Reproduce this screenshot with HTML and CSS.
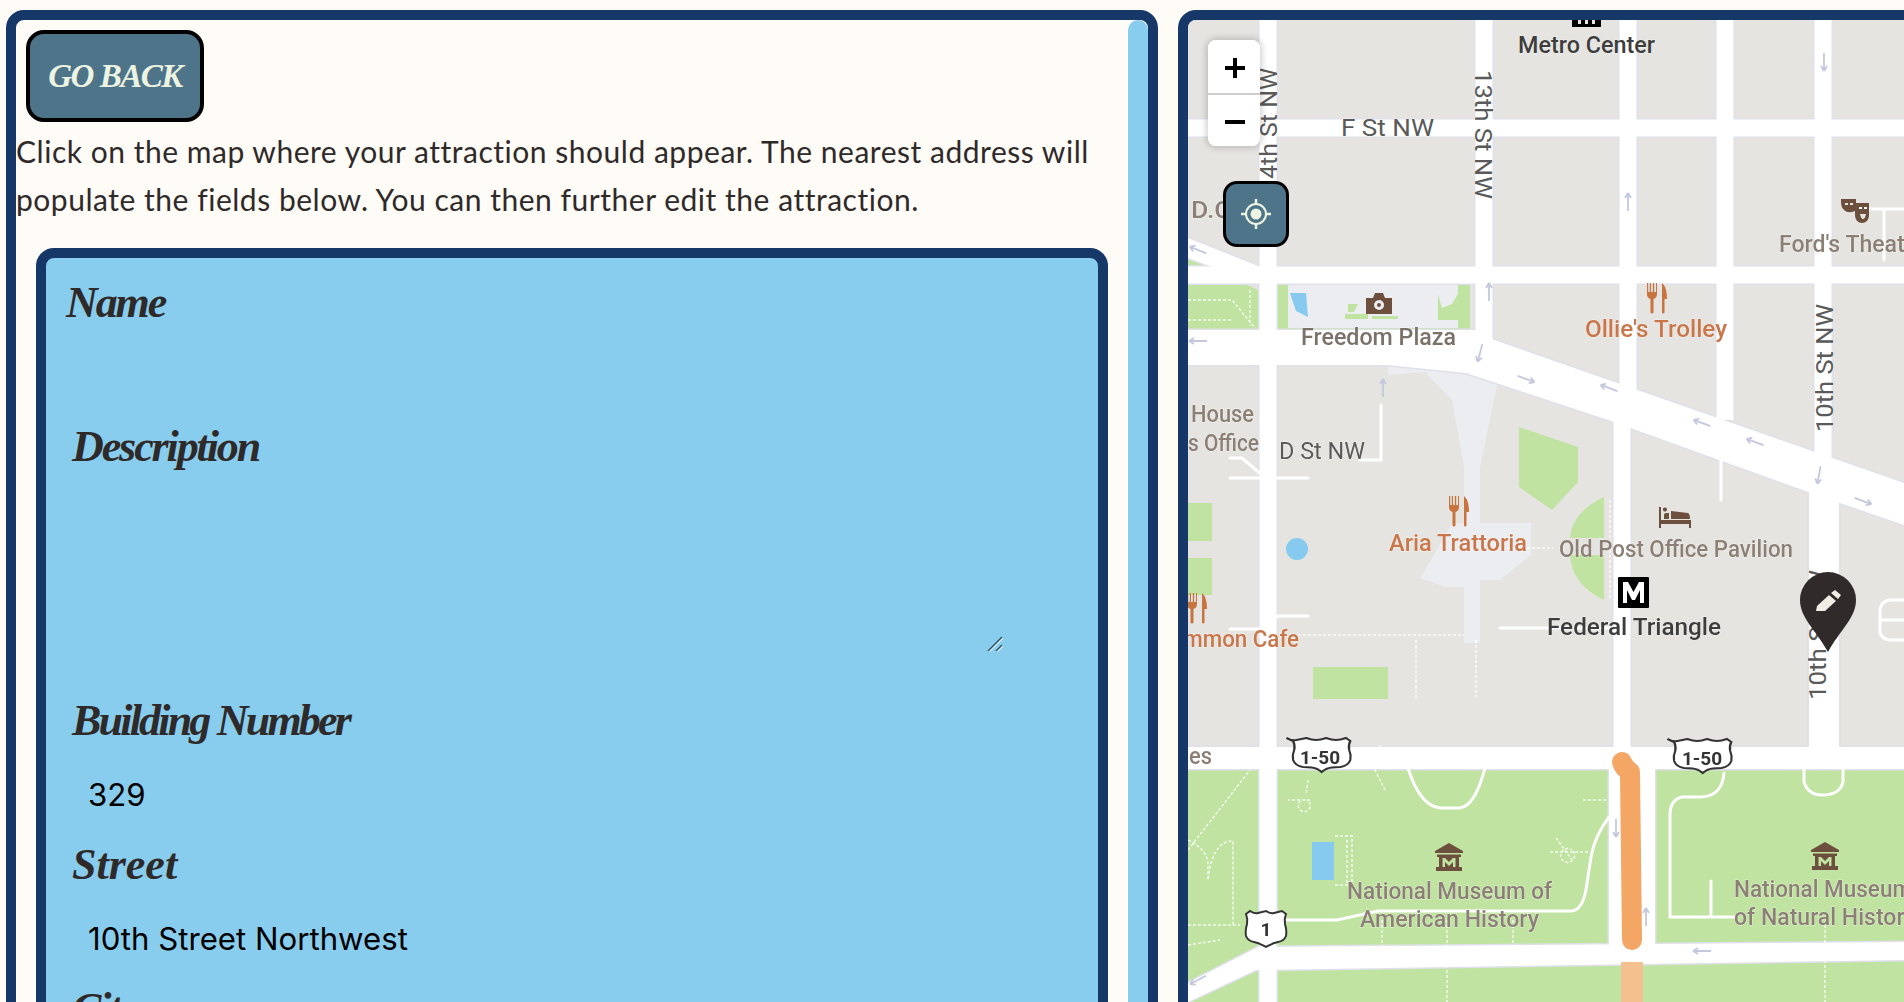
FILE: index.html
```html
<!DOCTYPE html>
<html lang="en">
<head>
<meta charset="utf-8">
<title>Add attraction</title>
<link rel="stylesheet" href="styles.css">
</head>
<body>
<main class="page">
  <section class="panel panel-form">
    <div class="panel-body">
      <button class="back-btn" type="button">Go Back</button>
      <p class="hint">Click on the map where your attraction should appear. The nearest address will populate the fields below. You can then further edit the attraction.</p>
      <form class="form-box">
        <div class="field">
          <label class="field-label" for="f-name">Name</label>
          <input class="field-input" id="f-name" type="text">
        </div>
        <div class="field field-desc">
          <label class="field-label field-label-in" for="f-desc">Description</label>
          <textarea class="field-area" id="f-desc"></textarea>
          <svg class="resize-handle" viewBox="0 0 16 16" width="16" height="16" aria-hidden="true">
            <path class="resize-light" d="M2 16L16 2M10 16L16 10"/>
            <path class="resize-dark" d="M1 15L15 1M9 15L15 9"/>
          </svg>
        </div>
        <div class="field">
          <label class="field-label field-label-in field-label-tight" for="f-num">Building Number</label>
          <input class="field-input" id="f-num" type="text" value="329">
        </div>
        <div class="field">
          <label class="field-label field-label-in field-label-wide" for="f-street">Street</label>
          <input class="field-input" id="f-street" type="text" value="10th Street Northwest">
        </div>
        <div class="field">
          <label class="field-label field-label-in" for="f-city">City</label>
          <input class="field-input" id="f-city" type="text" value="Washington">
        </div>
      </form>
    </div>
    <div class="scroll-thumb"></div>
  </section>

  <section class="panel panel-map">
    <svg class="map" viewBox="1188 20 716 982" width="716" height="982" aria-label="Map of downtown Washington">
      <defs>
        <path id="arr" d="M-9 0H9M-9 0l5-3M-9 0l5 3"/>
        <path id="fork" d="M0 0v11q0 4 3.500 5v13q0 1.500 1.500 1.500t1.500-1.500v-13q3.500-1 3.500-5V0H9v9H7.200V0H5.800v9H4V0H2.800v9H1.200V0zM15 0q5 4 5 16h-2.500v13q0 1.500-1.300 1.500T15 29z"/>
        <path id="museum" d="M14 0L28 8V10H0V8zM2 11.500H26V14H24V24H27V28H1V24H4V14H2zM7.500 15V24H10L10 19 14 23 18 19V24H20.500V15H18L14 19 10 15z"/>
        <path id="shield50" d="M5 1q4 3 9 2t9-2q5 2 9 2t9-2q5 2 9 2t9-2l4 3q-2 4-1 9 2 5 1 10-2 6-9 7-9 0-13 2-3 2-4 3-1-1-4-3-4-2-13-2-7-1-9-7-1-5 1-10 1-5-1-9z"/>
        <path id="shield1" d="M4 1q4 3 8 2t8-2q4 3 8 2t8-2l4 3q-2 5-1 10 2 7 1 12-2 5-8 6-5 1-8 3-2 1-4 2-2-1-4-2-3-2-8-3-6-1-8-6-1-5 1-12 1-5-1-10z"/>
        <g id="wide-roads">
          <path d="M1188 238L1258 266V284L1188 258Z"/>
          <path d="M1480 335L1904 483V525L1808 492 1614 422 1466 373 1388 365H1188V330H1480Z"/>
          <rect x="1809" y="480" width="30" height="275"/>
          <rect x="1188" y="747" width="716" height="22"/>
          <rect x="1609" y="760" width="46" height="190"/>
          <path d="M1258 947L1904 942V960L1256 970 1188 1002V983Z"/>
        </g>
      </defs>
      <g class="map-art">
        <rect class="m-ground" x="1188" y="20" width="716" height="982"/>
        <rect class="m-park" x="1188" y="760" width="716" height="242"/>

        <!-- parks and plazas -->
        <path class="m-park" d="M1188 258L1258 290V330H1188z"/>
        <rect class="m-park" x="1276" y="283" width="194" height="48"/>
        <rect class="m-plaza" x="1288" y="284" width="170" height="44"/>
        <path class="m-water" d="M1290 293H1306L1308 317L1296 311Z"/>
        <path class="m-park" d="M1348 304H1358L1354 312H1348ZM1345 314H1368V319H1345ZM1372 316H1398V319H1372ZM1438 294L1442 308 1452 304 1458 294V320H1438Z"/>
        <path class="m-plaza" d="M1388 365H1490L1498 380 1480 467 1480 523H1531V555L1500 580H1480V643H1464V587H1445L1420 578 1434 555 1452 523H1464V467L1452 400 1425 372 1388 375Z"/>
        <path class="m-park" d="M1519 427L1578 447V482L1552 510 1519 487Z"/>
        <path class="m-park" d="M1604 497V538H1570Q1572 512 1604 497ZM1570 555H1604V600Q1572 585 1570 555Z"/>
        <rect class="m-park" x="1188" y="503" width="24" height="38"/>
        <rect class="m-park" x="1188" y="558" width="24" height="37"/>
        <rect class="m-park" x="1313" y="667" width="75" height="32"/>
        <ellipse class="m-water" cx="1297" cy="549" rx="11" ry="11"/>
        <rect class="m-water" x="1312" y="842" width="22" height="38"/>

        <!-- road casings -->
        <g class="m-casing">
          <path d="M1268 20V1002M1484 20V340M1628 20V395M1622 420V760M1725 20V420M1823 20V470"/>
          <path d="M1188 128H1904M1188 275H1904"/>
        </g>
        <use class="m-casing-wide" href="#wide-roads"/>
        <!-- roads -->
        <g class="m-road">
          <path d="M1268 20V1002M1484 20V340M1628 20V395M1622 420V760M1725 20V420M1823 20V470"/>
          <path d="M1188 128H1904M1188 275H1904"/>
        </g>
        <use class="m-white" href="#wide-roads"/>

        <!-- service roads and footpaths -->
        <g class="m-path">
          <path d="M1408 768Q1420 806 1440 808H1460Q1475 806 1485 768"/>
          <path d="M1804 768V782Q1808 795 1822 795 1840 795 1843 782V768"/>
          <path d="M1724 773Q1722 797 1700 797H1682Q1670 800 1670 815V917H1734M1711 881V917"/>
          <path d="M1286 920H1337L1378 911H1572Q1582 910 1586 890L1591 857Q1595 835 1609 817"/>
          <path d="M1230 478L1262 478 1308 478M1230 458H1242L1262 475"/>
          <path d="M1230 629H1262L1278 616H1308"/>
          <path d="M1500 628H1614"/>
          <path d="M1381 405V460H1360M1721 460V500"/>
          <path d="M1844 209H1904M1719 135V222M1884 209V260"/>
          <path d="M1904 600H1892Q1880 600 1880 612V630Q1880 640 1892 640H1904M1880 620H1904"/>
        </g>
        <g class="m-dash">
          <path d="M1188 300H1232L1255 328M1232 300V300M1188 320H1232M1250 290V326"/>
          <path d="M1380 745L1375 770 1385 790M1310 800H1288M1309 802A6 6 0 1 1 1308 801M1308 780L1306 795"/>
          <path d="M1335 836H1352V885H1335M1347 840V884"/>
          <path d="M1188 850L1250 770M1188 840Q1208 850 1208 865V880Q1212 842 1232 841H1233V925"/>
          <path d="M1188 925H1240M1188 945L1220 940"/>
          <path d="M1382 920V947M1447 920V947M1513 920V947M1825 925V1002M1447 960V1002"/>
          <path d="M1583 800H1608M1556 838L1572 860M1550 852H1590M1573 851A7 7 0 1 1 1572 850"/>
          <path d="M1298 635H1464M1416 640V700M1476 640V700M1610 500V600"/>
          <path d="M1497 548H1553"/>
        </g>

        <!-- orange road -->
        <path class="m-orange" d="M1622 762Q1624 768 1630 772L1632 940"/>
        <rect class="m-orange-pale" x="1621" y="962" width="22" height="40"/>

        <g class="m-arrows">
          <use href="#arr" transform="translate(1824 62) rotate(-90)"/>
          <use href="#arr" transform="translate(1628 202) rotate(90)"/>
          <use href="#arr" transform="translate(1198 250) rotate(22)"/>
          <use href="#arr" transform="translate(1489 292) rotate(90)"/>
          <use href="#arr" transform="translate(1198 341)"/>
          <use href="#arr" transform="translate(1480 353) rotate(-75)"/>
          <use href="#arr" transform="translate(1526 379) rotate(200)"/>
          <use href="#arr" transform="translate(1609 388) rotate(20)"/>
          <use href="#arr" transform="translate(1383 388) rotate(90)"/>
          <use href="#arr" transform="translate(1702 423) rotate(20)"/>
          <use href="#arr" transform="translate(1755 442) rotate(20)"/>
          <use href="#arr" transform="translate(1819 475) rotate(-80)"/>
          <use href="#arr" transform="translate(1863 501) rotate(200)"/>
          <use href="#arr" transform="translate(1616 828) rotate(-90)"/>
          <use href="#arr" transform="translate(1646 917) rotate(90)"/>
          <use href="#arr" transform="translate(1702 951)"/>
          <use href="#arr" transform="translate(1198 980) rotate(-28)"/>
        </g>

        <!-- labels -->
        <text class="t t-dark" x="1518" y="53" textLength="137" lengthAdjust="spacingAndGlyphs">Metro Center</text>
        <text class="t t-road" x="1341" y="136" textLength="93" lengthAdjust="spacingAndGlyphs">F St NW</text>
        <text class="t t-road" transform="translate(1277 193) rotate(-90)" textLength="125" lengthAdjust="spacingAndGlyphs">14th St NW</text>
        <text class="t t-road" transform="translate(1475 70) rotate(90)" textLength="129" lengthAdjust="spacingAndGlyphs">13th St NW</text>
        <text class="t t-road" transform="translate(1833 432) rotate(-90)" textLength="128" lengthAdjust="spacingAndGlyphs">10th St NW</text>
        <text class="t t-road" transform="translate(1826 700) rotate(-90)" textLength="130" lengthAdjust="spacingAndGlyphs">10th St NW</text>
        <text class="t t-road" x="1279" y="459" textLength="86" lengthAdjust="spacingAndGlyphs">D St NW</text>
        <text class="t t-poi" x="1779" y="252" textLength="146" lengthAdjust="spacingAndGlyphs">Ford's Theatre</text>
        <text class="t t-plaza" x="1301" y="345" textLength="155" lengthAdjust="spacingAndGlyphs">Freedom Plaza</text>
        <text class="t t-food" x="1585" y="337" textLength="142" lengthAdjust="spacingAndGlyphs">Ollie's Trolley</text>
        <text class="t t-poi" x="1191" y="218" textLength="48" lengthAdjust="spacingAndGlyphs">D.C.</text>
        <text class="t t-poi" x="1191" y="422" textLength="63" lengthAdjust="spacingAndGlyphs">House</text>
        <text class="t t-poi" x="1188" y="451" textLength="71" lengthAdjust="spacingAndGlyphs">s Office</text>
        <text class="t t-food" x="1389" y="551" textLength="138" lengthAdjust="spacingAndGlyphs">Aria Trattoria</text>
        <text class="t t-poi" x="1559" y="557" textLength="234" lengthAdjust="spacingAndGlyphs">Old Post Office Pavilion</text>
        <text class="t t-dark" x="1547" y="635" textLength="174" lengthAdjust="spacingAndGlyphs">Federal Triangle</text>
        <text class="t t-food" x="1156" y="647" textLength="143" lengthAdjust="spacingAndGlyphs">Common Cafe</text>
        <text class="t t-poi" x="1189" y="764" textLength="23" lengthAdjust="spacingAndGlyphs">es</text>
        <text class="t t-poi" x="1347" y="899" textLength="205" lengthAdjust="spacingAndGlyphs">National Museum of</text>
        <text class="t t-poi" x="1360" y="927" textLength="179" lengthAdjust="spacingAndGlyphs">American History</text>
        <text class="t t-poi" x="1734" y="897" textLength="178" lengthAdjust="spacingAndGlyphs">National Museum</text>
        <text class="t t-poi" x="1734" y="925" textLength="182" lengthAdjust="spacingAndGlyphs">of Natural History</text>

        <!-- POI icons -->
        <path class="i-black" d="M1572 20H1601V27H1572ZM1578 20V24H1581V20ZM1585 20V24H1588V20ZM1592 20V24H1595V20Z" fill-rule="evenodd"/>
        <use class="i-food" href="#fork" transform="translate(1647 283)"/>
        <use class="i-food" href="#fork" transform="translate(1449 496)"/>
        <use class="i-food" href="#fork" transform="translate(1187 593)"/>
        <path class="i-brown" fill-rule="evenodd" d="M1366 298H1373L1375 293H1383L1385 298H1392V314H1366ZM1379 300A5 5 0 1 0 1379.100 310 5 5 0 0 0 1379 300ZM1379 303A2 2 0 1 1 1378.900 307 2 2 0 0 1 1379 303Z"/>
        <path class="i-brown" fill-rule="evenodd" d="M1841 199H1856V203H1869V216Q1868 223 1862 223 1856 223 1855 216V211Q1848 214 1844 210 1841 207 1841 202ZM1845 203V205H1848V203ZM1850 203V205H1853V203ZM1859 207V209H1862V207ZM1864 207V209H1867V207ZM1860 214H1866Q1865 219 1863 219 1861 219 1860 214Z"/>
        <path class="i-brown" d="M1659 507H1661V520H1691V528H1689V524H1661V528H1659ZM1666 513H1669V519H1664V515Q1664 513 1666 513ZM1671 511L1688 513Q1690 514 1690 519H1671ZM1663 510A2 2 0 1 1 1666.900 510 2 2 0 0 1 1663 510Z"/>
        <use class="i-brown" href="#museum" transform="translate(1435 843)"/>
        <use class="i-brown" href="#museum" transform="translate(1811 842)"/>
        <rect class="i-black" x="1618" y="577" width="31" height="31" rx="1"/>
        <path class="i-white" d="M1623 603V582H1628L1633.500 592 1639 582H1644V603H1640V590L1635 600H1632L1627 590V603Z"/>

        <!-- highway shields -->
        <use class="i-shield" href="#shield50" transform="translate(1281 737) scale(1.1 1)"/>
        <text class="t-shield" x="1320" y="764" text-anchor="middle">1-50</text>
        <use class="i-shield" href="#shield50" transform="translate(1662 738) scale(1.1 1)"/>
        <text class="t-shield" x="1702" y="765" text-anchor="middle">1-50</text>
        <use class="i-shield" href="#shield1" transform="translate(1246 910)"/>
        <text class="t-shield" x="1266" y="936" text-anchor="middle">1</text>
      </g>
      <!-- selected point pin -->
      <path class="pin" d="M1828 652C1816 630 1800 618 1800 600A28 28 0 0 1 1856 600C1856 618 1840 630 1828 652Z"/>
      <path class="pin-icon" d="M1835 590L1841 595 1838 599 1831 593ZM1829 595L1836 601 1825 611H1816L1817 606Z"/>
    </svg>

    <div class="zoom-ctl">
      <button class="zoom-btn" type="button" aria-label="Zoom in">
        <svg viewBox="0 0 24 24" width="24" height="24"><path class="ctl-stroke" d="M12 2V22M2 12H22"/></svg>
      </button>
      <button class="zoom-btn" type="button" aria-label="Zoom out">
        <svg viewBox="0 0 24 24" width="24" height="24"><path class="ctl-stroke" d="M2 12H22"/></svg>
      </button>
    </div>
    <button class="locate-btn" type="button" aria-label="Find my location">
      <svg viewBox="0 0 32 32" width="32" height="32">
        <circle class="loc-ring" cx="16" cy="16" r="10"/>
        <circle class="loc-dot" cx="16" cy="16" r="5.500"/>
        <path class="loc-tick" d="M16 1V6M16 26V31M1 16H6M26 16H31"/>
      </svg>
    </button>
  </section>
</main>
</body>
</html>
```
FILE: styles.css
```css
* { box-sizing: border-box; }
html, body { margin: 0; height: 100%; overflow: hidden; background: #fffbf7; }
.page {
  display: flex;
  gap: 20px;
  width: 2100px;
  padding: 10px 0 0 6px;
  height: 1200px;
}
.panel {
  border: 10px solid #163868;
  border-radius: 18px;
  height: 1150px;
  overflow: hidden;
}
.panel-form {
  width: 1152px;
  flex: none;
  background: #fffbf7;
  display: flex;
}
.panel-body { flex: 1; min-width: 0; }
.scroll-thumb {
  width: 20px;
  flex: none;
  background: #89cdee;
  border-radius: 10px 10px 0 0;
}
.back-btn {
  display: block;
  margin: 10px 0 0 10px;
  width: 178px;
  height: 92px;
  border: 4px solid #000;
  border-radius: 18px;
  background: #4d7489;
  color: #eef4e2;
  font: italic 700 33px "Liberation Serif", serif;
  text-transform: uppercase;
  letter-spacing: -1.500px;
  padding: 0;
}
.hint {
  margin: 0;
  padding-top: 5px;
  font: 400 30px/48px "Lato", sans-serif;
  color: #2f2a2a;
  letter-spacing: 0.52px;
  height: 112px;
}
.form-box {
  margin: 14px 20px 0 20px;
  padding: 0 20px;
  border: 10px solid #163868;
  border-radius: 18px;
  background: #89cdee;
}
.field { display: flex; flex-direction: column; }
.field-desc { position: relative; }
.field-label {
  font: italic 700 44px/90px "Liberation Serif", serif;
  letter-spacing: -2.100px;
  color: #2f2a2a;
  height: 84px;
}
.field-label-in { padding-left: 6px; }
.field-label-tight { letter-spacing: -2.800px; }
.field-label-wide { letter-spacing: 0; }
.field-input {
  height: 60px;
  border: 0;
  background: transparent;
  padding: 10px 22px 0;
  font: 400 31.200px "Inter", sans-serif;
  color: #000;
  outline: 0;
  width: 100%;
}
.field-area {
  height: 190px;
  width: 100%;
  border: 0;
  background: transparent;
  outline: 0;
  display: block;
  resize: none;
}
.resize-handle {
  position: absolute;
  left: 921px;
  top: 234px;
}
.resize-dark { fill: none; stroke: #2e4a5c; stroke-width: 1.300; }
.resize-light { fill: none; stroke: #d8eef9; stroke-width: 1.300; }
.panel-map {
  width: 900px;
  flex: none;
  position: relative;
  background: #e5e4e0;
}
.map { display: block; }
.map-art { filter: blur(0.6px); }
.m-ground { fill: #e5e4e0; }
.m-park { fill: #c0e3a1; }
.m-plaza { fill: #ecedf1; }
.m-water { fill: #86caef; }
.m-white { fill: #fff; }
.m-casing-wide { fill: #dfe0ea; stroke: #dfe0ea; stroke-width: 3; }
.m-casing path { fill: none; stroke: #dfe0ea; stroke-width: 20; }
.m-road path { fill: none; stroke: #fff; stroke-width: 17; }
.m-path path { fill: none; stroke: #fff; stroke-width: 3; stroke-linecap: round; }
.m-dash path { fill: none; stroke: #fff; stroke-width: 1.500; stroke-dasharray: 3 2; opacity: .8; }
.m-orange { fill: none; stroke: #f4a664; stroke-width: 20; stroke-linecap: round; stroke-linejoin: round; }
.m-orange-pale { fill: #f5c08f; }
.m-arrows use { fill: none; stroke: #c3c8de; stroke-width: 1.800; }
.t {
  font-family: "Roboto", sans-serif;
  font-size: 24px;
  font-weight: 500;
  paint-order: stroke;
  stroke: rgba(255, 255, 255, .55);
  stroke-width: 1px;
}
.t-dark { fill: #3d3d3d; }
.t-road { fill: #5a5a5a; font-weight: 400; }
.t-poi { fill: #8c8076; }
.t-plaza { fill: #7a7268; }
.t-food { fill: #c8764a; }
.t-shield { font: 700 19px "Roboto", sans-serif; fill: #333; }
.i-black { fill: #000; }
.i-white { fill: #fff; }
.i-food { fill: #c8743f; }
.i-brown { fill: #6d4f3e; }
.i-shield { fill: #fff; stroke: #333; stroke-width: 2; }
.pin { fill: #302a2a; }
.pin-icon { fill: #f1eee6; }
.zoom-ctl {
  position: absolute;
  left: 20px;
  top: 20px;
  width: 52px;
  background: #fff;
  border-radius: 8px;
  box-shadow: 0 0 6px 2px rgba(0, 0, 0, .18);
  overflow: hidden;
}
.zoom-btn {
  display: flex;
  align-items: center;
  justify-content: center;
  width: 52px;
  height: 53px;
  padding: 3px 0 0 2px;
  border: 0;
  background: #fff;
}
.zoom-btn + .zoom-btn { border-top: 2px solid #ccc; }
.ctl-stroke { fill: none; stroke: #000; stroke-width: 4; }
.locate-btn {
  position: absolute;
  left: 35px;
  top: 161px;
  width: 66px;
  height: 66px;
  padding: 0;
  display: flex;
  align-items: center;
  justify-content: center;
  background: #4d7489;
  border: 3px solid #000;
  border-radius: 14px;
}
.loc-ring { fill: none; stroke: #eef4e2; stroke-width: 2; }
.loc-dot { fill: #eef4e2; }
.loc-tick { stroke: #eef4e2; stroke-width: 2.500; }
```
